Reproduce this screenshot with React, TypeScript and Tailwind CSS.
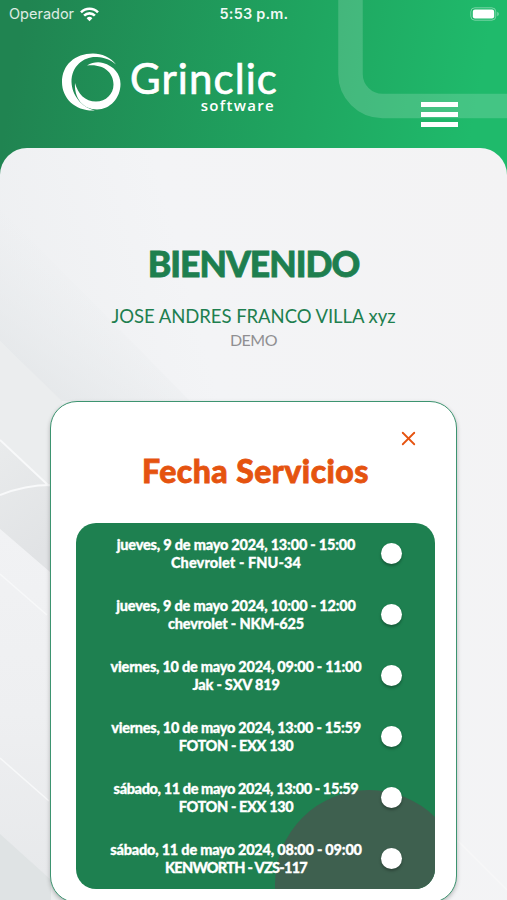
import { X } from "lucide-react";

type Service = {
  date: string;
  vehicle: string;
  dateClass: string;
  vehicleClass: string;
};

const SERVICES: Service[] = [
  { date: "jueves, 9 de mayo 2024, 13:00 - 15:00", vehicle: "Chevrolet - FNU-34", dateClass: "tracking-[-0.2px]", vehicleClass: "tracking-[0.1px]" },
  { date: "jueves, 9 de mayo 2024, 10:00 - 12:00", vehicle: "chevrolet - NKM-625", dateClass: "tracking-[-0.17px]", vehicleClass: "tracking-[-0.15px]" },
  { date: "viernes, 10 de mayo 2024, 09:00 - 11:00", vehicle: "Jak - SXV 819", dateClass: "tracking-[-0.24px]", vehicleClass: "tracking-[-0.2px]" },
  { date: "viernes, 10 de mayo 2024, 13:00 - 15:59", vehicle: "FOTON - EXX 130", dateClass: "tracking-[-0.27px]", vehicleClass: "tracking-[-0.35px]" },
  { date: "sábado, 11 de mayo 2024, 13:00 - 15:59", vehicle: "FOTON - EXX 130", dateClass: "tracking-[-0.38px]", vehicleClass: "tracking-[-0.35px]" },
  { date: "sábado, 11 de mayo 2024, 08:00 - 09:00", vehicle: "KENWORTH - VZS-117", dateClass: "tracking-[-0.2px]", vehicleClass: "tracking-[-0.72px]" },
];

function StatusBar() {
  return (
    <div className="relative flex h-7 items-center justify-between pl-[9px] pr-[7px] font-['Inter',sans-serif] text-white">
      <div className="flex items-center gap-[6px] text-[14.5px] text-white/85">
        <span>Operador</span>
        <svg width="19" height="15" viewBox="0 0 19 15" fill="none" stroke="white" strokeWidth="2.6">
          <path d="M1 5.3a12 12 0 0 1 17 0" />
          <path d="M4.1 8.6a7.6 7.6 0 0 1 10.8 0" />
          <path d="M9.5 14.3l-2.9-3a4.1 4.1 0 0 1 5.8 0z" fill="white" stroke="none" />
        </svg>
      </div>
      <span className="absolute left-[219.5px] text-[14.5px] font-semibold tracking-[0.2px] text-white/95">5:53 p.m.</span>
      <svg width="30" height="14" viewBox="0 0 30 14">
        <rect x="0.8" y="0.8" width="25" height="12.4" rx="4" fill="none" stroke="white" strokeOpacity="0.4" />
        <rect x="2.8" y="2.6" width="21.4" height="8.8" rx="2.2" fill="white" />
        <path d="M27.4 4.8a2.5 2.5 0 0 1 0 4.4z" fill="white" fillOpacity="0.5" />
      </svg>
    </div>
  );
}

function Logo() {
  return (
    <div className="flex pl-[62px] pt-[25px] text-white">
      <svg width="60" height="60" viewBox="0 0 60 60" fill="white">
        <path d="M54 11.500C48 4 40 0.500 31 0.500C13 0.500 0 12 0 29C0 46 14 58.500 33 57.500C19 54 10 42 9.500 29C9.500 12 23 3 35 4C43 4.500 49 7 54 11.500Z" />
        <path d="M25 12.500C30 9.500 36 8.500 41 10C52 13 58.500 21 58.500 31C58.500 45 48 56.500 35 56.500C21 56.500 12 45 13 30C16 41 23 48.500 34 48.500C44 48.500 51.500 41 51.500 31.500C51.500 20 42 10.500 25 12.500Z" />
      </svg>
      <div className="flex w-[156px] flex-col items-end font-['Lato',sans-serif]">
        <span className="text-[42px] leading-[50px] tracking-[1.1px] [-webkit-text-stroke:0.7px_white]">Grinclic</span>
        <span className="-mt-[8px] pr-[3px] font-['Open_Sans',sans-serif] text-[15px] font-semibold leading-[20px] tracking-[1.3px]">software</span>
      </div>
    </div>
  );
}

function Header() {
  return (
    <header className="relative h-[178px] shrink-0 bg-linear-[100deg,#208451_5%,#1fa560_58%,#1fba6b_92%]">
      <svg className="absolute inset-0" width="507" height="150" fill="none">
        <path d="M350.500 0V74a32 32 0 0 0 32 32H507" stroke="white" strokeOpacity="0.17" strokeWidth="24.500" />
      </svg>
      <StatusBar />
      <Logo />
      <button className="absolute left-[421px] top-[102px] flex flex-col gap-[5.500px]" aria-label="menu">
        <span className="h-[4.500px] w-[37px] bg-white" />
        <span className="h-[4.500px] w-[37px] bg-white" />
        <span className="h-[4.500px] w-[37px] bg-white" />
      </button>
    </header>
  );
}

function Backdrop() {
  return (
    <svg className="absolute inset-0" width="507" height="752" fill="none">
      <defs>
        <linearGradient id="shade" gradientUnits="userSpaceOnUse" x1="20" y1="216" x2="90" y2="125">
          <stop offset="0" stopColor="#e4e7e9" stopOpacity="0.8" />
          <stop offset="1" stopColor="#e8ebed" stopOpacity="0" />
        </linearGradient>
        <linearGradient id="band" x1="0" y1="0" x2="0.3" y2="1">
          <stop offset="0" stopColor="#e9ebec" />
          <stop offset="1" stopColor="#e1e3e5" />
        </linearGradient>
        <linearGradient id="pale" x1="0" y1="0" x2="0" y2="1">
          <stop offset="0" stopColor="#f1f2f4" />
          <stop offset="0.5" stopColor="#eeeff1" />
          <stop offset="1" stopColor="#e6e8ea" />
        </linearGradient>
      </defs>
      <path d="M0 60L190 253H60L0 193Z" fill="url(#shade)" />
      <path d="M0 193L62 253V752H0Z" fill="#ebedee" />
      <path d="M0 292L51 340V425L0 381Z" fill="url(#band)" />
      <path d="M0 381L51 425V752H0Z" fill="url(#pale)" />
      <path d="M0 292L49 338M0 347Q25 337 51 337" stroke="#f8f9fa" strokeWidth="2" />
      <path d="M0 426L47 467M0 610L49 653" stroke="#f7f8f9" strokeWidth="1.500" />
      <path d="M0 686L51 732V752H0Z" fill="#dfe3e4" />
      <path d="M457 692L507 742" stroke="#f7f7f8" strokeWidth="1.500" />
    </svg>
  );
}

function ServiceRow({ service }: { service: Service }) {
  return (
    <li className="relative flex h-[61px] items-center">
      <p className="w-[320px] whitespace-nowrap text-center text-[14.5px] leading-[18px] [-webkit-text-stroke:0.3px_white]">
        <span className={service.dateClass}>{service.date}</span>
        <br />
        <span className={service.vehicleClass}>{service.vehicle}</span>
      </p>
      <span className="-ml-[15px] size-[21px] rounded-full bg-white shadow-[0_2px_3px_rgba(0,0,0,0.3)]" />
    </li>
  );
}

export default function App() {
  return (
    <div className="flex h-[900px] w-[507px] flex-col overflow-hidden bg-[#f3f4f5] font-['Lato',sans-serif]">
      <Header />
      <main className="relative -mt-[30px] flex h-[752px] shrink-0 flex-col items-center overflow-hidden rounded-t-[27px] bg-linear-[75deg,#eaecee,#f3f4f6_50%,#f3f3f4]">
        <Backdrop />
        <div className="relative flex flex-col items-center pt-[92px] text-[#1e7f4f]">
          <h1 className="text-[35.5px] font-black leading-[48px] tracking-[-1px] [-webkit-text-stroke:0.8px_#1e7f4f]">BIENVENIDO</h1>
          <p className="mt-[15px] text-[18.5px] leading-[26px] tracking-[-0.05px]">JOSE ANDRES FRANCO VILLA xyz</p>
          <p className="text-[16px] leading-[22px] tracking-[-0.5px] text-[#8f8f92]">DEMO</p>
        </div>

        <section className="relative mt-[50px] flex h-[502px] w-[407px] shrink-0 flex-col items-center rounded-[27px] border border-[#3d9470] bg-white shadow-[0_2px_4px_rgba(0,0,0,0.25)]">
          <button className="absolute right-[36px] top-[25px] text-[#e5530f]" aria-label="cerrar">
            <X size={23} strokeWidth={1.9} />
          </button>
          <h2 className="ml-[4px] mt-[48px] text-[32px] font-black leading-[42px] tracking-[0.45px] text-[#e5530f] [-webkit-text-stroke:0.8px_#e5530f]">
            Fecha Servicios
          </h2>
          <ul className="relative ml-[4px] mt-[31px] h-[366px] w-[359px] overflow-hidden rounded-[20px] bg-[#1e8050] font-black text-white">
            <li className="absolute left-[199px] top-[267px] size-[188px] rounded-full bg-[#3e604f]" aria-hidden="true" />
            {SERVICES.map((service) => (
              <ServiceRow key={service.date} service={service} />
            ))}
          </ul>
        </section>
      </main>
    </div>
  );
}
